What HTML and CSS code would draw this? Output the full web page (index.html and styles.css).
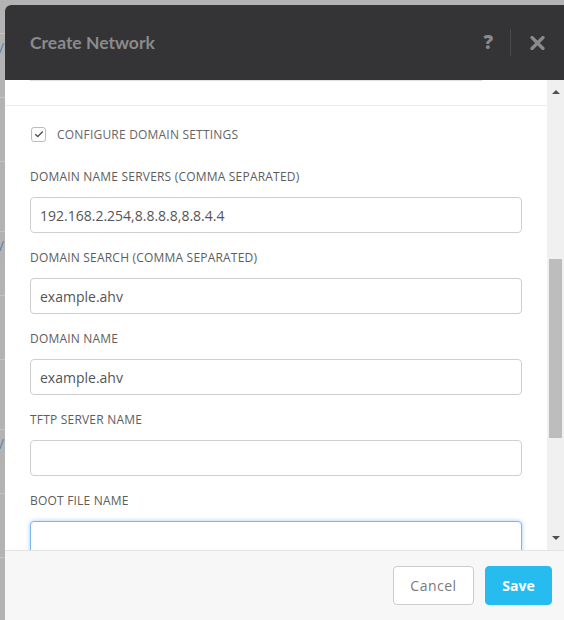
FILE: index.html
```html
<!DOCTYPE html>
<html>
<head>
<meta charset="utf-8">
<link rel="stylesheet" href="styles.css">
</head>
<body>
<div class="backdrop">
  <div class="bg-row"><span class="slash">/</span></div>
  <div class="bg-row"></div>
  <div class="bg-row tall"></div>
  <div class="bg-row"><span class="slash">/</span></div>
  <div class="bg-row"></div>
  <div class="bg-row tall"></div>
  <div class="bg-row"><span class="slash">/</span></div>
  <div class="bg-row"></div>
  <div class="bg-row"></div>
</div>
<div class="modal">
  <div class="modal-header">
    <h1 class="title">Create Network</h1>
    <div class="header-actions">
      <span class="help">?</span>
      <span class="divider"></span>
      <svg class="close" width="15" height="14" viewBox="0 0 15 14"><path d="M2 1.5 L13 12.5 M13 1.5 L2 12.5" stroke="#8a8a8a" stroke-width="3.2" stroke-linecap="round"/></svg>
    </div>
  </div>
  <div class="modal-body">
    <div class="content">
      <div class="prev-section"><div class="prev-shadow"></div></div>
      <label class="check-row">
        <span class="checkbox"><svg width="10" height="8" viewBox="0 0 10 8"><path d="M1.2 4.2 L3.8 6.6 L8.8 1.4" fill="none" stroke="#555" stroke-width="1.4"/></svg></span>
        <span class="check-label">CONFIGURE DOMAIN SETTINGS</span>
      </label>
      <div class="field">
        <div class="field-label">DOMAIN NAME SERVERS (COMMA SEPARATED)</div>
        <div class="input">192.168.2.254,8.8.8.8,8.8.4.4</div>
      </div>
      <div class="field">
        <div class="field-label">DOMAIN SEARCH (COMMA SEPARATED)</div>
        <div class="input">example.ahv</div>
      </div>
      <div class="field">
        <div class="field-label">DOMAIN NAME</div>
        <div class="input">example.ahv</div>
      </div>
      <div class="field">
        <div class="field-label">TFTP SERVER NAME</div>
        <div class="input"></div>
      </div>
      <div class="field">
        <div class="field-label">BOOT FILE NAME</div>
        <div class="input focused"></div>
      </div>
    </div>
    <div class="scrollbar">
      <span class="arrow up"></span>
      <div class="track"><div class="thumb"></div></div>
      <span class="arrow down"></span>
    </div>
  </div>
  <div class="modal-footer">
    <button class="btn cancel">Cancel</button>
    <button class="btn save">Save</button>
  </div>
</div>
</body>
</html>
```
FILE: styles.css
```css
* { box-sizing: border-box; }
html, body { margin: 0; padding: 0; }
body {
  width: 564px;
  height: 620px;
  overflow: hidden;
  background: #b3b3b3;
  font-family: "Open Sans", "Liberation Sans", sans-serif;
  position: relative;
}
.backdrop {
  display: flex;
  flex-direction: column;
  padding-top: 33px;
}
.bg-row {
  height: 64px;
  border-top: 1px solid #c4c4c4;
  position: relative;
}
.bg-row.tall { height: 70px; }
.slash {
  position: absolute;
  left: -1px;
  top: 4px;
  color: #5a7fa8;
  font-size: 14px;
}
.modal {
  position: absolute;
  left: 5px;
  top: 5px;
  right: 0;
  bottom: 0;
  background: #fff;
  border-radius: 6px 0 0 0;
  display: flex;
  flex-direction: column;
  overflow: hidden;
}
.modal-header {
  height: 75px;
  flex: none;
  background: #343436;
  display: flex;
  align-items: center;
  justify-content: space-between;
  padding: 0 19px 0 25px;
}
.title {
  margin: 0;
  font-family: Lato, "Open Sans", sans-serif;
  font-weight: 700;
  font-size: 17.5px;
  color: #8b8b8b;
}
.header-actions {
  display: flex;
  align-items: center;
}
.help {
  font-family: "Open Sans", sans-serif;
  font-weight: 800;
  font-size: 19px;
  color: #8a8a8a;
  line-height: 1;
}
.divider {
  width: 1px;
  height: 27px;
  background: #4a4a4c;
  margin: 0 19px 0 17px;
}
.close { display: block; }
.modal-body {
  flex: 1;
  display: flex;
  min-height: 0;
}
.content {
  flex: 1;
  overflow: hidden;
  padding: 0 25px;
  background: #fff;
}
.prev-section {
  height: 26px;
  margin: 0 -25px;
  border-bottom: 1px solid #ececec;
}
.prev-shadow {
  height: 1px;
  margin: 0 25px;
  background: #e0e0e0;
  width: 452px;
}
.check-row {
  display: flex;
  align-items: center;
  height: 14px;
  margin-top: 21px;
}
.checkbox {
  width: 15px;
  height: 15px;
  border: 1px solid #bdbdbd;
  border-radius: 3px;
  display: flex;
  align-items: center;
  justify-content: center;
  margin: 0 11px 0 1px;
}
.check-label {
  font-size: 12px;
  color: #666;
  letter-spacing: 0.2px;
}
.field {
  display: flex;
  flex-direction: column;
  margin-top: 29px;
}
.field + .field { margin-top: 18px; }
.field-label {
  font-size: 12px;
  letter-spacing: 0.2px;
  color: #5d5d5d;
  line-height: 14px;
  margin-bottom: 13px;
}
.input {
  height: 36px;
  border: 1px solid #cfcfcf;
  border-radius: 4px;
  padding: 0 9px;
  display: flex;
  align-items: center;
  font-size: 14px;
  color: #555;
  background: #fff;
}
.input.focused {
  border-color: #7cb8ee;
  box-shadow: 0 0 4px rgba(90, 160, 240, 0.55);
}
.scrollbar {
  width: 17px;
  flex: none;
  background: #f0f0f0;
  display: flex;
  flex-direction: column;
  align-items: center;
}
.arrow {
  width: 0;
  height: 0;
  border-left: 4px solid transparent;
  border-right: 4px solid transparent;
  flex: none;
}
.arrow.up {
  border-bottom: 4px solid #505050;
  margin-top: 10px;
}
.arrow.down {
  border-top: 4px solid #505050;
  margin-bottom: 10px;
}
.track {
  flex: 1;
  width: 100%;
  position: relative;
}
.thumb {
  position: absolute;
  left: 2px;
  right: 2px;
  top: 165px;
  height: 179px;
  background: #bdbdbd;
}
.modal-footer {
  height: 70px;
  flex: none;
  background: #f7f7f7;
  border-top: 1px solid #e3e3e3;
  display: flex;
  justify-content: flex-end;
  align-items: flex-start;
  padding: 15px 12px 0 0;
  gap: 11px;
}
.btn {
  height: 39px;
  border-radius: 4px;
  font-family: "Open Sans", sans-serif;
  font-size: 14px;
  cursor: pointer;
}
.cancel {
  width: 81px;
  background: #fff;
  border: 1px solid #ccc;
  color: #7a7a7a;
  letter-spacing: 0.5px;
}
.save {
  width: 67px;
  background: #26bcef;
  border: 1px solid #26bcef;
  color: #fff;
  font-weight: 700;
}
```
